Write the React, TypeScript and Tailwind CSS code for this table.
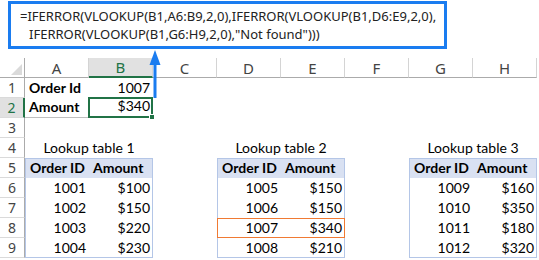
type Row = [string, string];

type TableProps = {
  title: string;
  col: string;
  rows: Row[];
  hot?: number;
};

const cellFont = { fontFamily: 'Lato, "Liberation Sans", sans-serif' };
const uiFont = { fontFamily: '"Noto Sans", "Open Sans", sans-serif' };

const cols = ["A", "B", "C", "D", "E", "F", "G", "H"];

function LookupTable({ title, col, rows, hot }: TableProps) {
  return (
    <>
      <div
        className={`${col} row-start-5 col-span-2 flex items-end justify-center pb-[1px] text-[14px] text-black`}
        style={cellFont}
      >
        {title}
      </div>
      <div
        className={`${col} row-start-6 col-span-2 row-span-5 flex flex-col overflow-visible border border-[#b4c6e7]`}
        style={cellFont}
      >
        <div className="grid h-[19px] grid-cols-2 bg-[#d9e1f2] text-[14px] font-bold text-black">
          <div className="flex items-end pb-[1px] pl-[4px]">Order ID</div>
          <div className="flex items-end pb-[1px] pl-[4px]">Amount</div>
        </div>
        {rows.map((r, i) => (
          <div
            key={r[0]}
            className={`grid h-[20px] shrink-0 grid-cols-2 text-[14px] text-black ${
              i === hot ? "-mx-px border border-[#f07a33]" : ""
            }`}
          >
            <div className="flex items-end justify-end pb-[1px] pr-[3px]">{r[0]}</div>
            <div className="flex items-end justify-end pb-[1px] pr-[2px]">{r[1]}</div>
          </div>
        ))}
      </div>
    </>
  );
}

export default function App() {
  return (
    <div className="relative h-[260px] w-[539px] overflow-hidden bg-white">
      <div className="pl-[8px] pt-[1px]">
        <div
          className="h-[48px] w-[439px] border-[3px] border-[#1a7cf0] pl-[9px] pt-[3px] text-[13px] leading-[18px] text-[#222]"
          style={uiFont}
        >
          <div>=IFERROR(VLOOKUP(B1,A6:B9,2,0),IFERROR(VLOOKUP(B1,D6:E9,2,0),</div>
          <div className="pl-[9px]">IFERROR(VLOOKUP(B1,G6:H9,2,0),"Not found")))</div>
        </div>
      </div>

      <div className="mt-[9px] grid grid-cols-[25px_repeat(8,64px)] grid-rows-[20px_repeat(9,20px)] leading-[18px]">
        {/* corner */}
        <div className="relative border-b border-r border-[#ababab]">
          <svg className="absolute bottom-[2px] right-[2px]" width="11" height="11" viewBox="0 0 11 11">
            <polygon points="11,0 11,11 0,11" fill="#dadada" />
          </svg>
        </div>
        {cols.map((c) => (
          <div
            key={c}
            className={`flex items-center justify-center text-[15px] ${
              c === "B"
                ? "border-b-2 border-r border-b-[#217346] border-r-[#d4d4d4] bg-[#e1e1e1] text-[#217346]"
                : "border-b border-r border-b-[#ababab] border-r-[#d4d4d4] text-[#444]"
            }`}
            style={uiFont}
          >
            {c}
          </div>
        ))}

        {/* row headers */}
        {[1, 2, 3, 4, 5, 6, 7, 8, 9].map((n) => (
          <div
            key={n}
            className={`col-start-1 flex items-center justify-center border-b border-b-[#dadada] text-[14px] ${
              n === 2
                ? "border-r-2 border-r-[#217346] bg-[#e1e1e1] text-[#217346]"
                : "border-r border-r-[#ababab] text-[#444]"
            }`}
            style={{ ...uiFont, gridRowStart: n + 1 }}
          >
            {n}
          </div>
        ))}

        {/* lookup cells */}
        <div className="col-start-2 row-start-2 flex items-end pb-[1px] pl-[4px] text-[14px] font-bold" style={cellFont}>
          Order Id
        </div>
        <div className="col-start-3 row-start-2 flex items-end justify-end pb-[1px] pr-[3px] text-[14px]" style={cellFont}>
          1007
        </div>
        <div className="col-start-2 row-start-3 flex items-end border-b border-[#bfbfbf] pb-[1px] pl-[4px] text-[14px] font-bold" style={cellFont}>
          Amount
        </div>
        <div className="relative col-start-3 row-start-3 -ml-px -mt-px flex items-end justify-end border-2 border-[#217346] pb-[1px] pr-[1px] text-[14px]" style={cellFont}>
          $340
          <div className="absolute -bottom-[4px] -right-[4px] h-[6px] w-[6px] border border-white bg-[#217346]" />
        </div>

        <LookupTable
          title="Lookup table 1"
          col="col-start-2"
          rows={[
            ["1001", "$100"],
            ["1002", "$150"],
            ["1003", "$220"],
            ["1004", "$230"],
          ]}
        />
        <LookupTable
          title="Lookup table 2"
          col="col-start-5"
          hot={2}
          rows={[
            ["1005", "$150"],
            ["1006", "$150"],
            ["1007", "$340"],
            ["1008", "$210"],
          ]}
        />
        <LookupTable
          title="Lookup table 3"
          col="col-start-8"
          rows={[
            ["1009", "$160"],
            ["1010", "$350"],
            ["1011", "$180"],
            ["1012", "$320"],
          ]}
        />
      </div>

      {/* arrow from B1 to the formula */}
      <svg className="absolute left-[148px] top-[48px]" width="14" height="50" viewBox="0 0 14 50">
        <rect x="5.5" y="12" width="3" height="38" fill="#1a7cf0" />
        <polygon points="7,2 1.5,17 12.5,17" fill="#1a7cf0" />
      </svg>
    </div>
  );
}
